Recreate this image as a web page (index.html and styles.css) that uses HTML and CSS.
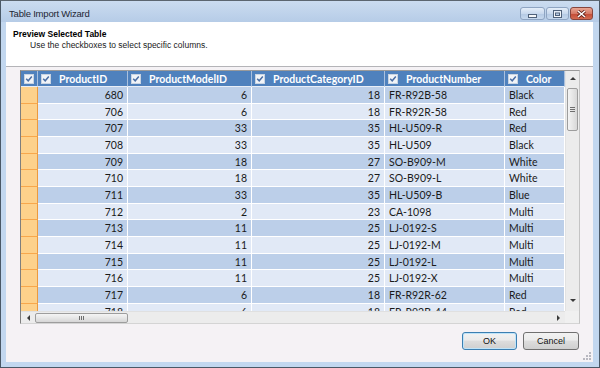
FILE: index.html
```html
<!DOCTYPE html>
<html lang="en">
<head>
    <meta charset="UTF-8">
    <title>Table Import Wizard</title>
    <link rel="stylesheet" href="styles.css">
</head>
<body>
    <div class="window">
        <div class="titlebar">
            <span class="title">Table Import Wizard</span>
            <div class="caption-buttons">
                <span class="cap-btn cap-min">
                    <svg width="9" height="4" viewBox="0 0 9 4"><rect x="0.5" y="0.5" width="8" height="3" fill="#f4f6f9" stroke="#50617a"/></svg>
                </span>
                <span class="cap-btn cap-max">
                    <svg width="9" height="8" viewBox="0 0 9 8"><rect x="0.5" y="0.5" width="8" height="7" fill="none" stroke="#50617a"/><rect x="1.5" y="2" width="6" height="4.5" fill="none" stroke="#f4f6f9"/><rect x="2.5" y="3" width="4" height="2.5" fill="none" stroke="#50617a"/></svg>
                </span>
                <span class="cap-btn cap-close">
                    <svg width="9" height="8" viewBox="0 0 9 8"><path d="M1 1 L8 7 M8 1 L1 7" stroke="#5b1c14" stroke-width="3"/><path d="M1 1 L8 7 M8 1 L1 7" stroke="#fff" stroke-width="1.6"/></svg>
                </span>
            </div>
        </div>
        <div class="client">
            <div class="page-header">
                <div class="page-title">Preview Selected Table</div>
                <div class="page-subtitle">Use the checkboxes to select specific columns.</div>
            </div>
            <div class="page-body">
                <div class="grid-frame">
                    <div class="grid-top">
                        <div class="grid-view">
                            <div class="grid-row grid-head">
                                <div class="cell sel-head"><span class="check"></span></div>
                                <div class="cell col-head"><span class="check"></span>ProductID</div>
                                <div class="cell col-head"><span class="check"></span>ProductModelID</div>
                                <div class="cell col-head"><span class="check"></span>ProductCategoryID</div>
                                <div class="cell col-head"><span class="check"></span>ProductNumber</div>
                                <div class="cell col-head"><span class="check"></span>Color</div>
                            </div>
                            <div class="grid-row dark"><div class="cell sel"></div><div class="cell num">680</div><div class="cell num">6</div><div class="cell num">18</div><div class="cell">FR-R92B-58</div><div class="cell">Black</div></div>
                            <div class="grid-row"><div class="cell sel"></div><div class="cell num">706</div><div class="cell num">6</div><div class="cell num">18</div><div class="cell">FR-R92R-58</div><div class="cell">Red</div></div>
                            <div class="grid-row dark"><div class="cell sel"></div><div class="cell num">707</div><div class="cell num">33</div><div class="cell num">35</div><div class="cell">HL-U509-R</div><div class="cell">Red</div></div>
                            <div class="grid-row"><div class="cell sel"></div><div class="cell num">708</div><div class="cell num">33</div><div class="cell num">35</div><div class="cell">HL-U509</div><div class="cell">Black</div></div>
                            <div class="grid-row dark"><div class="cell sel"></div><div class="cell num">709</div><div class="cell num">18</div><div class="cell num">27</div><div class="cell">SO-B909-M</div><div class="cell">White</div></div>
                            <div class="grid-row"><div class="cell sel"></div><div class="cell num">710</div><div class="cell num">18</div><div class="cell num">27</div><div class="cell">SO-B909-L</div><div class="cell">White</div></div>
                            <div class="grid-row dark"><div class="cell sel"></div><div class="cell num">711</div><div class="cell num">33</div><div class="cell num">35</div><div class="cell">HL-U509-B</div><div class="cell">Blue</div></div>
                            <div class="grid-row"><div class="cell sel"></div><div class="cell num">712</div><div class="cell num">2</div><div class="cell num">23</div><div class="cell">CA-1098</div><div class="cell">Multi</div></div>
                            <div class="grid-row dark"><div class="cell sel"></div><div class="cell num">713</div><div class="cell num">11</div><div class="cell num">25</div><div class="cell">LJ-0192-S</div><div class="cell">Multi</div></div>
                            <div class="grid-row"><div class="cell sel"></div><div class="cell num">714</div><div class="cell num">11</div><div class="cell num">25</div><div class="cell">LJ-0192-M</div><div class="cell">Multi</div></div>
                            <div class="grid-row dark"><div class="cell sel"></div><div class="cell num">715</div><div class="cell num">11</div><div class="cell num">25</div><div class="cell">LJ-0192-L</div><div class="cell">Multi</div></div>
                            <div class="grid-row"><div class="cell sel"></div><div class="cell num">716</div><div class="cell num">11</div><div class="cell num">25</div><div class="cell">LJ-0192-X</div><div class="cell">Multi</div></div>
                            <div class="grid-row dark"><div class="cell sel"></div><div class="cell num">717</div><div class="cell num">6</div><div class="cell num">18</div><div class="cell">FR-R92R-62</div><div class="cell">Red</div></div>
                            <div class="grid-row"><div class="cell sel"></div><div class="cell num">718</div><div class="cell num">6</div><div class="cell num">18</div><div class="cell">FR-R92B-44</div><div class="cell">Red</div></div>
                        </div>
                        <div class="vscroll">
                            <span class="arrow arrow-up"></span>
                            <div class="vscroll-track">
                                <span class="vthumb"><span class="grip-h"></span></span>
                            </div>
                            <span class="arrow arrow-down"></span>
                        </div>
                    </div>
                    <div class="hscroll-row">
                        <div class="hscroll">
                            <span class="arrow arrow-left"></span>
                            <div class="hscroll-track">
                                <span class="hthumb"><span class="grip-v"></span></span>
                            </div>
                            <span class="arrow arrow-right"></span>
                        </div>
                        <div class="scroll-corner"></div>
                    </div>
                </div>
                <div class="dialog-buttons">
                    <button class="btn btn-default">OK</button>
                    <button class="btn">Cancel</button>
                </div>
                <span class="size-grip">
                    <svg width="8" height="8" viewBox="0 0 8 8" fill="#b8b8c0"><rect x="6" y="0" width="2" height="2"/><rect x="3" y="3" width="2" height="2"/><rect x="6" y="3" width="2" height="2"/><rect x="0" y="6" width="2" height="2"/><rect x="3" y="6" width="2" height="2"/><rect x="6" y="6" width="2" height="2"/></svg>
                </span>
            </div>
        </div>
    </div>
</body>
</html>
```

FILE: styles.css
```css
* {
    box-sizing: border-box;
}
body {
    margin: 0;
    font-family: "Liberation Sans", Arial, sans-serif;
    background: #fff;
}
.window {
    width: 600px;
    height: 368px;
    display: flex;
    flex-direction: column;
    background: #c2d7ef;
    border: 1px solid #4a5866;
    border-top-color: #5c6670;
}
.titlebar {
    height: 21px;
    display: flex;
    align-items: flex-start;
    justify-content: space-between;
    background: linear-gradient(#cbdcf0, #b6cce7);
    padding: 0 6px 0 8px;
}
.title {
    font-size: 9.5px;
    letter-spacing: -0.2px;
    color: #1e2633;
    line-height: 12px;
    margin-top: 7px;
}
.caption-buttons {
    display: flex;
    gap: 1px;
    margin-top: 6px;
}
.cap-btn {
    height: 13px;
    display: flex;
    align-items: center;
    justify-content: center;
    border: 1px solid #8ea4c2;
    border-radius: 3px;
    background: linear-gradient(#e4edf8, #c9d9ee 50%, #b4c9e4 51%, #c6d8ee);
}
.cap-min {
    width: 25px;
    padding-top: 4px;
}
.cap-max {
    width: 23px;
}
.cap-close {
    width: 23px;
    border-color: #86453d;
    background: linear-gradient(#e8a593, #d67a66 50%, #c24a35 51%, #d36a50);
}
.client {
    flex: 1;
    margin: 0 6px 5px 5px;
    display: flex;
    flex-direction: column;
    position: relative;
}
.page-header {
    height: 45px;
    background: #fff;
    border-bottom: 1px solid #b4b4b8;
    padding: 7px 0 0 7px;
    line-height: 11px;
    color: #000;
}
.page-title {
    font-size: 8.5px;
    font-weight: bold;
}
.page-subtitle {
    font-size: 8.5px;
    padding-left: 17px;
    color: #1a1a1a;
}
.page-body {
    flex: 1;
    background: #f5f2f5;
    padding: 3px 13px 0 14px;
}
.grid-frame {
    width: 560px;
    height: 254px;
    border: 1px solid;
    border-color: #9a9a9a #c4c4c4 #d4d4d4 #7e7e7e;
    display: flex;
    flex-direction: column;
}
.grid-top {
    height: 240px;
    display: flex;
}
.grid-view {
    width: 544px;
    overflow: hidden;
    font-family: Lato, "Open Sans", sans-serif;
    font-size: 10.5px;
    color: #1a1a1a;
}
.grid-row {
    display: grid;
    grid-template-columns: 17px 90px 124px 133px 120px 60px;
    height: 16.67px;
    background: #e1e9f6;
}
.grid-row.dark {
    background: #bccfe9;
}
.cell {
    border-right: 1px solid #fff;
    border-bottom: 1px solid #fff;
    padding: 0 4px;
    line-height: 17px;
    white-space: nowrap;
    overflow: hidden;
}
.cell.num {
    text-align: right;
}
.cell.sel {
    background: #fdd18b;
    border-bottom-color: #f7a74c;
    border-right-color: #eb9a3e;
}
.grid-head {
    height: 16px;
    background: #4f81bd;
}
.grid-head .cell {
    border-right-color: #a9c0de;
    border-bottom-color: #e8eef7;
    color: #fff;
    font-weight: bold;
    display: flex;
    align-items: center;
    padding: 1px 0 0 3px;
    line-height: 15px;
}
.grid-head .sel-head {
    justify-content: center;
    padding: 0;
}
.col-head .check {
    margin-right: 8px;
    margin-top: -1px;
}
.check {
    width: 10px;
    height: 10px;
    flex: none;
    border: 1px solid #c9d4e2;
    background: #f1f4f8 url("data:image/svg+xml,%3Csvg xmlns='http://www.w3.org/2000/svg' width='8' height='8' viewBox='0 0 8 8'%3E%3Cpath d='M1.2 3.8 L3.2 5.8 L6.8 1.6' fill='none' stroke='%234a6ea5' stroke-width='1.5'/%3E%3C/svg%3E") center / 8px 8px no-repeat;
}
.vscroll {
    width: 14px;
    display: flex;
    flex-direction: column;
    background: #ececec;
    border-left: 1px solid #e2e2e2;
}
.vscroll-track {
    flex: 1;
    padding-top: 1px;
}
.vthumb {
    display: flex;
    align-items: center;
    justify-content: center;
    width: 11px;
    height: 43px;
    margin-left: 1px;
    border: 1px solid #9d9d9d;
    border-radius: 2px;
    background: linear-gradient(90deg, #f4f4f4, #e6e6e6 50%, #d8d8d8);
}
.grip-h {
    width: 5px;
    height: 5px;
    border-top: 1px solid #6e6e6e;
    border-bottom: 1px solid #6e6e6e;
    background: linear-gradient(transparent 1px, #6e6e6e 1px 2px, transparent 2px);
}
.arrow {
    flex: none;
    display: flex;
    align-items: center;
    justify-content: center;
}
.arrow::before {
    content: "";
    border: 3px solid transparent;
}
.arrow-up {
    height: 16px;
}
.arrow-up::before {
    border-bottom-color: #3a3a3a;
    border-top-width: 0;
    margin-top: -2px;
}
.arrow-down {
    height: 16px;
}
.arrow-down::before {
    border-top-color: #3a3a3a;
    border-bottom-width: 0;
    margin-top: -6px;
}
.hscroll-row {
    height: 12px;
    display: flex;
}
.hscroll {
    width: 544px;
    display: flex;
    background: #ececec;
    border-top: 1px solid #e0e0e0;
}
.hscroll-track {
    flex: 1;
    padding-top: 1px;
}
.hthumb {
    display: flex;
    align-items: center;
    justify-content: center;
    width: 93px;
    height: 10px;
    border: 1px solid #9d9d9d;
    border-radius: 2px;
    background: linear-gradient(#f4f4f4, #e6e6e6 50%, #d6d6d6);
}
.grip-v {
    width: 5px;
    height: 4px;
    border-left: 1px solid #6e6e6e;
    border-right: 1px solid #6e6e6e;
    background: linear-gradient(90deg, transparent 1px, #6e6e6e 1px 2px, transparent 2px);
}
.arrow-left {
    width: 14px;
}
.arrow-left::before {
    border-right-color: #3a3a3a;
    border-left-width: 0;
    margin-left: 1px;
}
.arrow-right {
    width: 14px;
}
.arrow-right::before {
    border-left-color: #3a3a3a;
    border-right-width: 0;
}
.scroll-corner {
    flex: 1;
    background: #f0f0f0;
}
.dialog-buttons {
    display: flex;
    justify-content: flex-end;
    gap: 6px;
    margin-top: 8px;
    margin-right: 1px;
}
.btn {
    height: 18px;
    width: 56px;
    font-family: "Liberation Sans", Arial, sans-serif;
    font-size: 9px;
    color: #111;
    padding: 0;
    border: 1px solid #707070;
    border-radius: 3px;
    background: linear-gradient(#f2f2f2, #ebebeb 45%, #dddddd 50%, #cfcfcf);
}
.btn-default {
    width: 55px;
    border-color: #3c7fb1;
    box-shadow: inset 0 0 0 1px #bfe4f9;
}
.size-grip {
    position: absolute;
    right: 2px;
    bottom: 2px;
    line-height: 0;
}
```
